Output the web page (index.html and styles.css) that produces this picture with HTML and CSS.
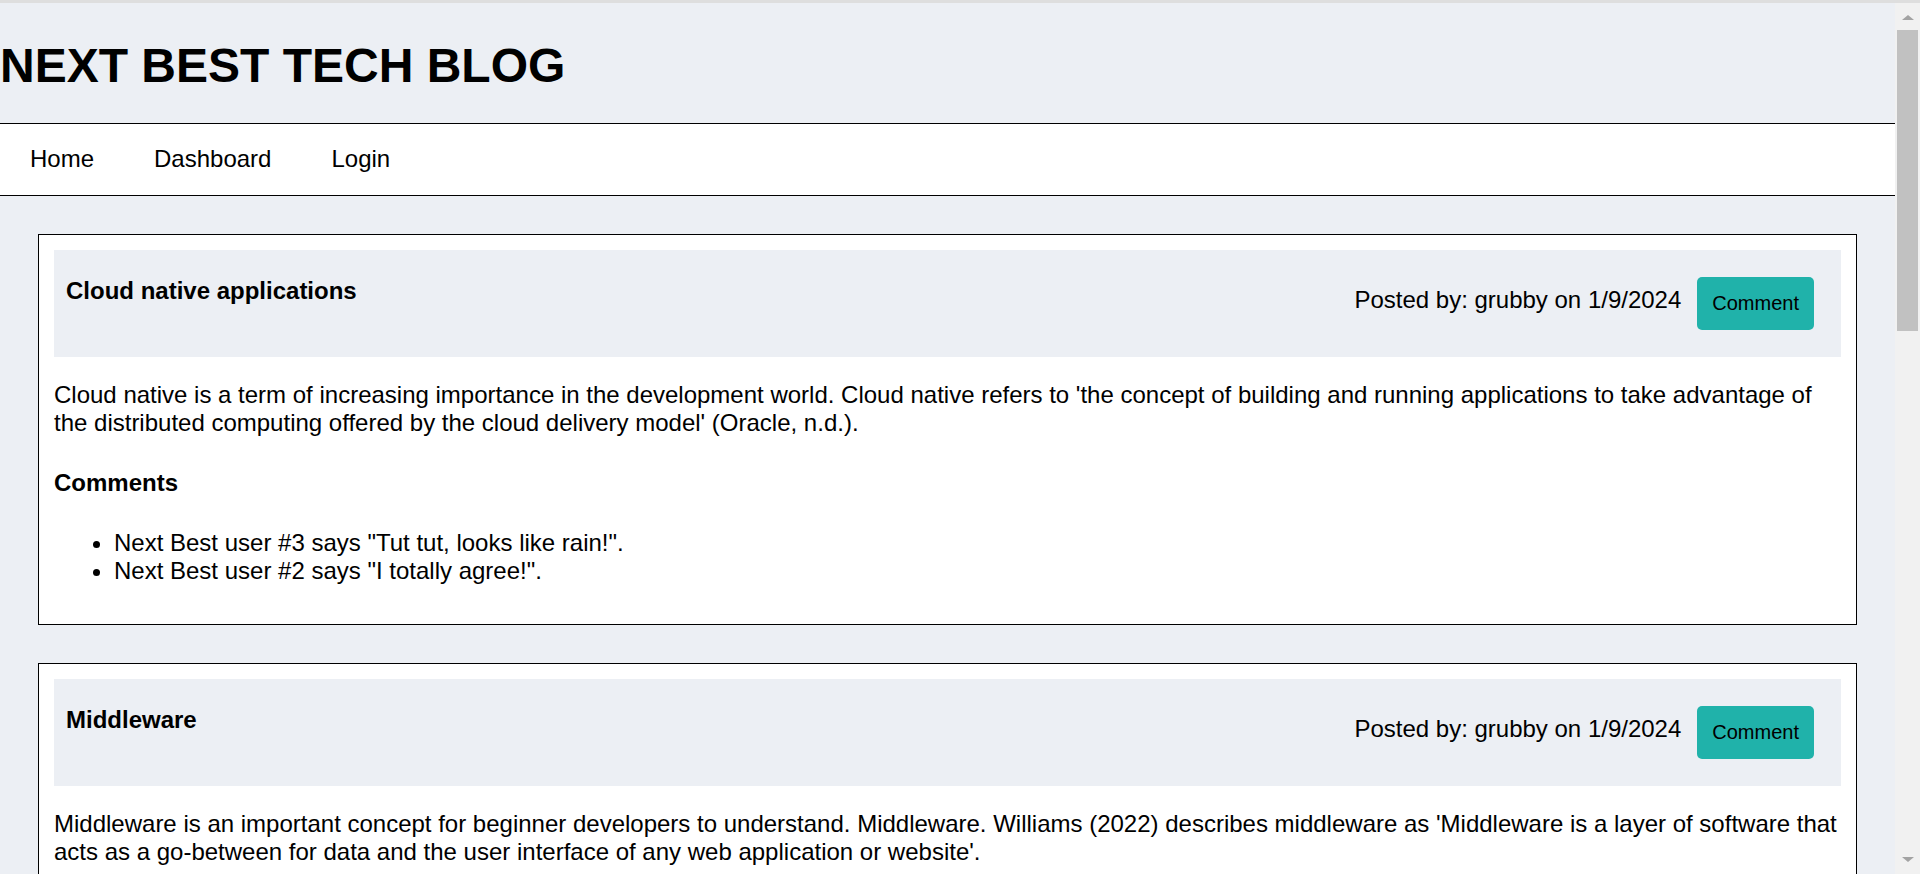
FILE: index.html
```html
<!DOCTYPE html>
<html lang="en">
<head>
<meta charset="utf-8">
<title>Next Best Tech Blog</title>
<link rel="stylesheet" href="styles.css">
</head>
<body>
<header class="site-header">
  <h1 class="site-title">NEXT BEST TECH BLOG</h1>
</header>
<nav class="site-nav">
  <a class="nav-link" href="#">Home</a>
  <a class="nav-link" href="#">Dashboard</a>
  <a class="nav-link" href="#">Login</a>
</nav>
<main class="posts">
  <article class="post">
    <div class="post-head">
      <h2 class="post-title">Cloud native applications</h2>
      <div class="post-meta">
        <span class="post-by">Posted by: grubby on 1/9/2024</span>
        <button class="btn-comment" type="button">Comment</button>
      </div>
    </div>
    <p class="post-body">Cloud native is a term of increasing importance in the development world. Cloud native refers to 'the concept of building and running applications to take advantage of the distributed computing offered by the cloud delivery model' (Oracle, n.d.).</p>
    <h3 class="comments-title">Comments</h3>
    <ul class="comments">
      <li>Next Best user #3 says "Tut tut, looks like rain!".</li>
      <li>Next Best user #2 says "I totally agree!".</li>
    </ul>
  </article>
  <article class="post">
    <div class="post-head">
      <h2 class="post-title">Middleware</h2>
      <div class="post-meta">
        <span class="post-by">Posted by: grubby on 1/9/2024</span>
        <button class="btn-comment" type="button">Comment</button>
      </div>
    </div>
    <p class="post-body">Middleware is an important concept for beginner developers to understand. Middleware. Williams (2022) describes middleware as 'Middleware is a layer of software that acts as a go-between for data and the user interface of any web application or website'.</p>
    <h3 class="comments-title">Comments</h3>
    <ul class="comments">
      <li>Next Best user #1 says "Very helpful, thanks!".</li>
      <li>Next Best user #4 says "Great explanation!".</li>
    </ul>
  </article>
  <article class="post">
    <div class="post-head">
      <h2 class="post-title">Object-relational mapping</h2>
      <div class="post-meta">
        <span class="post-by">Posted by: grubby on 1/9/2024</span>
        <button class="btn-comment" type="button">Comment</button>
      </div>
    </div>
    <p class="post-body">Object-relational mapping (ORM) is a technique that lets developers query and manipulate data from a database using an object-oriented paradigm, rather than writing raw SQL statements for every operation in an application.</p>
    <h3 class="comments-title">Comments</h3>
    <ul class="comments">
      <li>Next Best user #2 says "Sequelize makes this easy!".</li>
    </ul>
  </article>
  <article class="post">
    <div class="post-head">
      <h2 class="post-title">Model-View-Controller</h2>
      <div class="post-meta">
        <span class="post-by">Posted by: grubby on 1/9/2024</span>
        <button class="btn-comment" type="button">Comment</button>
      </div>
    </div>
    <p class="post-body">MVC is an architectural pattern that separates an application into three main logical components: the model, the view and the controller. Each of these components is built to handle specific development aspects of an application.</p>
    <h3 class="comments-title">Comments</h3>
    <ul class="comments">
      <li>Next Best user #3 says "Clear and concise.".</li>
    </ul>
  </article>
  <article class="post">
    <div class="post-head">
      <h2 class="post-title">Authentication vs. authorization</h2>
      <div class="post-meta">
        <span class="post-by">Posted by: grubby on 1/9/2024</span>
        <button class="btn-comment" type="button">Comment</button>
      </div>
    </div>
    <p class="post-body">Authentication is the process of verifying who a user is, while authorization is the process of verifying what they have access to. Both are essential for keeping the data of any web application secure.</p>
    <h3 class="comments-title">Comments</h3>
    <ul class="comments">
      <li>Next Best user #1 says "Good to know!".</li>
    </ul>
  </article>
</main>
<div class="scrollbar" aria-hidden="true">
  <span class="scroll-arrow scroll-up"></span>
  <span class="scroll-thumb"></span>
  <span class="scroll-arrow scroll-down"></span>
</div>
</body>
</html>
```
FILE: styles.css
```css
html {
  background: #eceff4;
}

body {
  margin: 0 25px 0 0;
  border-top: 3px solid #dedede;
  font-family: "Liberation Sans", Arial, sans-serif;
  font-size: 24px;
  color: #000;
  background: #eceff4;
}

.site-header {
  background: #eceff4;
  border-bottom: 1px solid #000;
}

.site-title {
  margin: 35px 0 30px;
  font-size: 48px;
  font-weight: bold;
  line-height: normal;
}

.site-nav {
  display: flex;
  background: #fff;
  padding: 21px 0 22px;
  border-bottom: 1px solid #000;
}

.nav-link {
  padding: 0 30px;
  color: #000;
  text-decoration: none;
  line-height: normal;
}

.posts {
  display: flex;
  flex-direction: column;
  gap: 38px;
  padding: 38px;
}

.post {
  background: #fff;
  border: 1px solid #000;
  padding: 15px;
}

.post-head {
  display: flex;
  justify-content: space-between;
  align-items: flex-start;
  background: #eceff4;
  padding: 12px;
}

.post-title {
  margin: 15px 0;
  font-size: 24px;
  font-weight: bold;
  line-height: normal;
}

.post-meta {
  display: flex;
  align-items: flex-start;
  margin: 15px;
}

.post-by {
  margin-top: 9px;
  line-height: normal;
}

.btn-comment {
  margin-left: 16px;
  padding: 15px 15px;
  border: none;
  border-radius: 5px;
  background: #20b2aa;
  color: #000;
  font-family: "Liberation Sans", Arial, sans-serif;
  font-size: 20px;
  line-height: normal;
}

.post-body {
  margin: 24px 0;
  line-height: normal;
}

.comments-title {
  margin: 32px 0;
  font-size: 24px;
  font-weight: bold;
  line-height: normal;
}

.comments {
  margin: 24px 0;
  padding-left: 60px;
  line-height: normal;
}

/* Imitation of the browser's vertical scrollbar, drawn over the right edge */
.scrollbar {
  position: fixed;
  top: 0;
  right: 0;
  bottom: 0;
  width: 25px;
  background: #f1f1f1;
  border-top: 3px solid #dedede;
}

.scroll-thumb {
  position: absolute;
  top: 27px;
  left: 2px;
  right: 2px;
  height: 301px;
  background: #c1c1c1;
}

.scroll-arrow {
  position: absolute;
  left: 7px;
  width: 0;
  height: 0;
  border-left: 6px solid transparent;
  border-right: 6px solid transparent;
}

.scroll-up {
  top: 12px;
  border-bottom: 5px solid #a3a3a3;
}

.scroll-down {
  bottom: 12px;
  border-top: 5px solid #a3a3a3;
}
```
